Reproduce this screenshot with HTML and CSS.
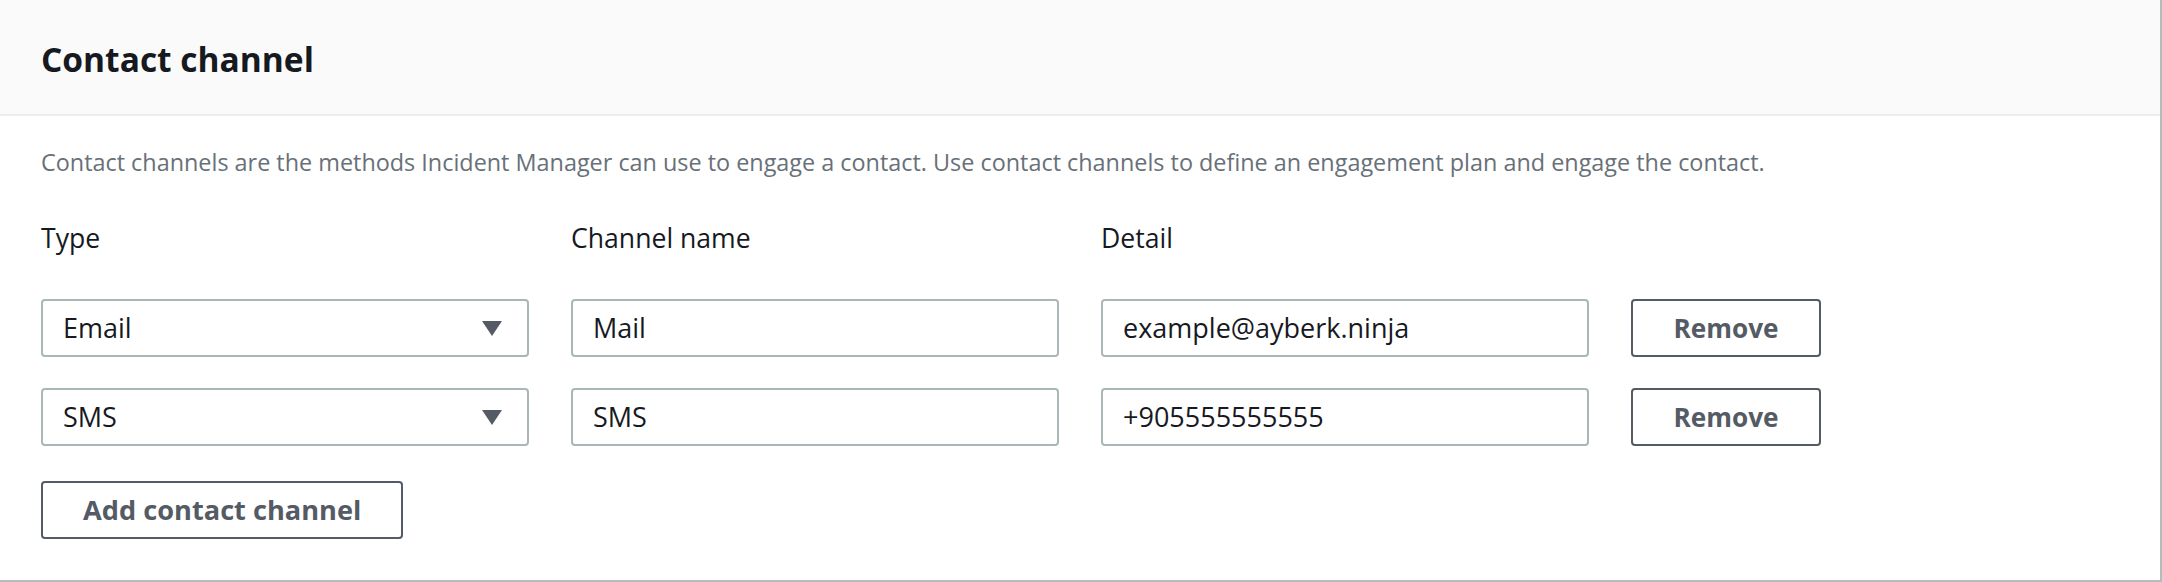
FILE: index.html
```html
<!DOCTYPE html>
<html lang="en">
<head>
<meta charset="utf-8">
<title>Contact channel</title>
<link rel="stylesheet" href="styles.css">
</head>
<body>
<section class="container">
  <header class="container-header">
    <h2 class="title">Contact channel</h2>
  </header>
  <div class="container-body">
    <p class="description">Contact channels are the methods Incident Manager can use to engage a contact. Use contact channels to define an engagement plan and engage the contact.</p>
    <div class="grid labels">
      <div class="label">Type</div>
      <div class="label">Channel name</div>
      <div class="label">Detail</div>
      <div></div>
    </div>
    <div class="grid row">
      <div class="field select">
        <span class="value">Email</span>
        <svg class="caret" width="20" height="15" viewBox="0 0 20 15"><path d="M0 0H20L10 15Z" fill="#545b64"/></svg>
      </div>
      <div class="field"><span class="value">Mail</span></div>
      <div class="field"><span class="value">example@ayberk.ninja</span></div>
      <button class="btn btn-remove">Remove</button>
    </div>
    <div class="grid row">
      <div class="field select">
        <span class="value">SMS</span>
        <svg class="caret" width="20" height="15" viewBox="0 0 20 15"><path d="M0 0H20L10 15Z" fill="#545b64"/></svg>
      </div>
      <div class="field"><span class="value">SMS</span></div>
      <div class="field"><span class="value">+905555555555</span></div>
      <button class="btn btn-remove">Remove</button>
    </div>
    <button class="btn btn-add">Add contact channel</button>
  </div>
</section>
</body>
</html>
```
FILE: styles.css
```css
* { box-sizing: border-box; }
html, body { margin: 0; padding: 0; background: #ffffff; }
body { font-family: "Open Sans", "Noto Sans", sans-serif; color: #16191f; }

.container {
  width: 2162px;
  height: 582px;
  background: #ffffff;
  border-right: 2px solid #b4bcbe;
  border-bottom: 2px solid #b4bcbe;
}

.container-header {
  background: #fafafa;
  border-bottom: 2px solid #eaeded;
  height: 116px;
  padding: 36px 41px 0;
}
.title {
  margin: 0;
  font-size: 33.5px;
  line-height: 46px;
  font-weight: 700;
  color: #16191f;
}

.container-body {
  padding: 30px 41px 0;
}
.description {
  margin: 0;
  font-size: 23.4px;
  line-height: 32px;
  color: #687078;
}

.grid {
  display: grid;
  grid-template-columns: 488px 488px 488px 190px;
  column-gap: 42px;
}
.labels { margin-top: 42px; }
.label {
  font-size: 26.6px;
  line-height: 36px;
  color: #16191f;
}
.row { margin-top: 31px; }
.labels + .row { margin-top: 43px; }

.field {
  height: 58px;
  border: 2px solid #aab7b8;
  border-radius: 4px;
  background: #ffffff;
  padding: 0 20px;
  display: flex;
  align-items: center;
  justify-content: space-between;
}
.value {
  font-size: 27px;
  line-height: 54px;
  color: #16191f;
  white-space: nowrap;
}
.select { padding-right: 25px; }
.caret { display: block; flex: none; }

.btn {
  height: 58px;
  border: 2px solid #545b64;
  border-radius: 4px;
  background: #ffffff;
  color: #545b64;
  font-family: "Open Sans", "Noto Sans", sans-serif;
  font-weight: 700;
  padding: 0;
  cursor: pointer;
}
.btn-remove {
  width: 190px;
  font-size: 26.2px;
  line-height: 54px;
}
.btn-add {
  display: block;
  margin-top: 35px;
  padding: 0 40px;
  font-size: 27.2px;
  line-height: 54px;
}
```
